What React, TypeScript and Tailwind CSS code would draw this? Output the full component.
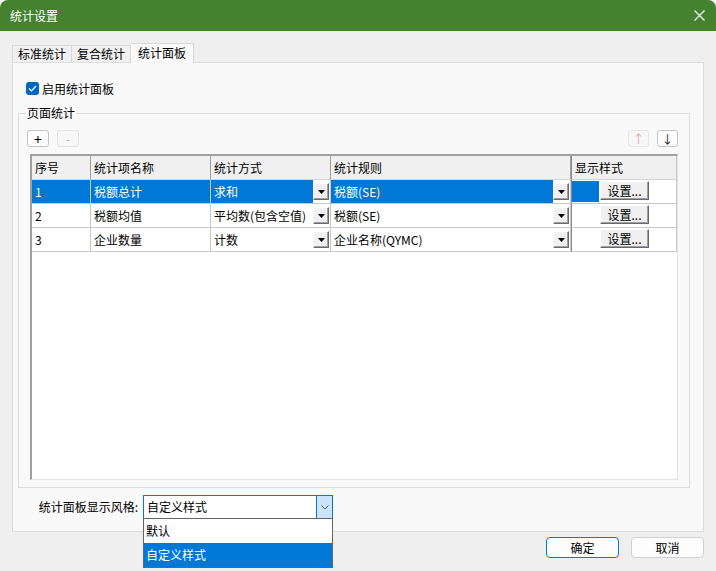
import React from 'react';

const font = '[font-family:"Noto_Sans_CJK_SC","Noto_Sans",sans-serif]';

type Row = {
  no: string;
  name: string;
  method: string;
  rule: string;
  selected?: boolean;
};

const rows: Row[] = [
  { no: '1', name: '税额总计', method: '求和', rule: '税额(SE)', selected: true },
  { no: '2', name: '税额均值', method: '平均数(包含空值)', rule: '税额(SE)' },
  { no: '3', name: '企业数量', method: '计数', rule: '企业名称(QYMC)' },
];

const gridCols = 'grid grid-cols-[59px_120px_120px_240px_1fr]';

function DropBtn(): React.ReactElement {
  return (
    <div className="mt-[3px] w-[16px] h-[17px] shrink-0 bg-[#f0f0f0] border border-t-white border-l-white border-r-[#696969] border-b-[#696969] shadow-[inset_-1px_-1px_0_#a0a0a0] flex items-center justify-center">
      <svg width="7" height="4" viewBox="0 0 7 4">
        <polygon points="0,0 7,0 3.5,4" fill="#000" />
      </svg>
    </div>
  );
}

function ComboCell({ text, selected }: { text: string; selected?: boolean }): React.ReactElement {
  return (
    <div className="flex bg-white border-r border-b border-[#c8c8c8] pr-px">
      <div
        className={[
          'flex-1 pl-[3px] pt-[4px] leading-[16px] whitespace-nowrap',
          selected ? 'bg-[#0078d7] text-white' : '',
        ].join(' ')}
      >
        {text}
      </div>
      <DropBtn />
    </div>
  );
}

function SetBtn(): React.ReactElement {
  return (
    <div className="w-[49px] h-[19px] bg-[#f0f0f0] border border-t-white border-l-white border-r-[#696969] border-b-[#696969] shadow-[inset_-1px_-1px_0_#a0a0a0] flex items-center justify-center leading-none">
      设置...
    </div>
  );
}

export default function App(): React.ReactElement {
  return (
    <div className={`w-[716px] h-[571px] bg-[#efefef] flex flex-col text-[12px] text-black rounded-t-[8px] overflow-hidden ${font}`}>
      {/* Title bar */}
      <div className="h-[31px] shrink-0 bg-[#44822f] flex items-center justify-between pl-[10px] pr-[10px] text-white text-[12px]">
        <span>统计设置</span>
        <svg width="11" height="11" viewBox="0 0 11 11" className="mr-px">
          <path d="M0.5 0.5 L10.5 10.5 M10.5 0.5 L0.5 10.5" stroke="#fff" strokeWidth="1.1" />
        </svg>
      </div>

      <div className="flex flex-col pl-[12px] pt-[12px]">
        {/* Tabs */}
        <div className="flex items-end h-[19px]">
          <div className="w-[60px] h-[17px] border border-b-0 border-[#d9d9d9] bg-[#f0f0f0] flex items-center justify-center leading-none">
            标准统计
          </div>
          <div className="w-[59px] h-[17px] border border-l-0 border-b-0 border-[#d9d9d9] bg-[#f0f0f0] flex items-center justify-center leading-none">
            复合统计
          </div>
          <div className="relative z-10 -mb-px w-[63px] h-[20px] border border-l-0 border-b-0 border-[#d9d9d9] bg-[#f9f9f9] flex items-center justify-center leading-none pb-[2px]">
            统计面板
          </div>
        </div>

        {/* Tab panel */}
        <div className="w-[692px] h-[470px] border border-[#dcdcdc] bg-[#f9f9f9] flex flex-col">
          <div className="flex items-center mt-[19px] ml-[13px] h-[13px]">
            <div className="w-[13px] h-[13px] rounded-[3px] bg-[#0067c0] flex items-center justify-center">
              <svg width="9" height="7" viewBox="0 0 9 7">
                <path d="M1 3.5 L3.5 6 L8 1" stroke="#fff" strokeWidth="1.2" fill="none" />
              </svg>
            </div>
            <span className="ml-[3px] leading-none">启用统计面板</span>
          </div>

          {/* Group box */}
          <div className="relative mt-[18px] ml-[5px] w-[672px] h-[375px] border border-[#dcdcdc] flex flex-col px-[11px] pt-[16px]">
            <span className="absolute -top-[8px] left-[7px] bg-[#f9f9f9] px-px leading-[14px]">页面统计</span>

            <div className="flex items-center justify-between h-[17px]">
              <div className="flex gap-[8px] -ml-[3px]">
                <div className="w-[22px] h-[17px] rounded-[3px] border border-[#c4c4c4] bg-[#fdfdfd] flex items-center justify-center text-[14px] leading-none">
                  +
                </div>
                <div className="w-[22px] h-[17px] rounded-[3px] border border-[#e3e3e3] bg-[#f7f7f7] flex items-center justify-center text-[#b8b8b8] leading-none">
                  -
                </div>
              </div>
              <div className="flex gap-[8px]">
                <div className="w-[21px] h-[17px] rounded-[3px] border border-[#e6e6e6] bg-[#f7f7f7] flex items-center justify-center text-[#e6a5a5] leading-none">
                  ↑
                </div>
                <div className="w-[21px] h-[17px] rounded-[3px] border border-[#c4c4c4] bg-[#fdfdfd] flex items-center justify-center text-[#1a1a1a] leading-none">
                  ↓
                </div>
              </div>
            </div>

            {/* Grid */}
            <div className="mt-[7px] w-[648px] h-[326px] bg-white border-t-2 border-l-2 border-t-[#a0a0a0] border-l-[#a0a0a0] border-r border-b border-r-[#e3e3e3] border-b-[#e3e3e3] flex flex-col">
              <div className={`${gridCols} h-[24px] bg-[#f0f0f0]`}>
                {['序号', '统计项名称', '统计方式', '统计规则'].map((h) => (
                  <div key={h} className="pl-[3px] flex items-center border-r border-b border-r-[#a0a0a0] border-b-[#d4d4d4]">
                    {h}
                  </div>
                ))}
                <div className="pl-[3px] flex items-center border-r border-b border-r-[#c8c8c8] border-b-[#d4d4d4] border-l border-l-[#888]">
                  显示样式
                </div>
              </div>

              {rows.map((r) => (
                <div key={r.no} className={`${gridCols} h-[24px]`}>
                  <div
                    className={[
                      'pl-[3px] flex items-center border-r border-b border-[#c8c8c8]',
                      r.selected ? 'bg-[#0078d7] text-white' : '',
                    ].join(' ')}
                  >
                    {r.no}
                  </div>
                  <div
                    className={[
                      'pl-[3px] flex items-center border-r border-b border-[#c8c8c8]',
                      r.selected ? 'bg-[#0078d7] text-white' : '',
                    ].join(' ')}
                  >
                    {r.name}
                  </div>
                  <ComboCell text={r.method} selected={r.selected} />
                  <ComboCell text={r.rule} selected={r.selected} />
                  <div className="flex items-start border-r border-b border-[#c8c8c8] border-l border-l-[#888]">
                    <div className={['mt-[1px] w-[27px] h-[21px]', r.selected ? 'bg-[#0078d7]' : ''].join(' ')} />
                    <div className="mt-[1px] ml-[1px]">
                      <SetBtn />
                    </div>
                  </div>
                </div>
              ))}
            </div>
          </div>

          {/* Style select */}
          <div className="flex items-center mt-[7px] h-[24px]">
            <span className="w-[130px] text-right pr-[5px] leading-none">统计面板显示风格:</span>
            <div className="relative w-[190px] h-[24px] border border-[#0078d7] bg-white flex">
              <div className="flex-1 pl-[3px] flex items-center">自定义样式</div>
              <div className="w-[16px] bg-[#cce4f7] border-l border-[#0078d7] flex items-center justify-center">
                <svg width="8" height="5" viewBox="0 0 8 5">
                  <path d="M0.5 0.5 L4 4 L7.5 0.5" stroke="#555" strokeWidth="1" fill="none" />
                </svg>
              </div>

              {/* Open list */}
              <div className="absolute z-20 top-full -left-px w-[190px] h-[50px] bg-white border border-[#646464] flex flex-col">
                <div className="h-[24px] pl-[2px] flex items-center">默认</div>
                <div className="h-[24px] pl-[2px] flex items-center bg-[#0078d7] text-white">自定义样式</div>
              </div>
            </div>
          </div>
        </div>
      </div>

      {/* Footer buttons */}
      <div className="flex justify-end gap-[12px] pr-[12px] mt-[5px]">
        <div className="w-[73px] h-[21px] rounded-[4px] border border-[#0078d4] bg-[#fdfdfd] flex items-center justify-center leading-none">
          确定
        </div>
        <div className="w-[73px] h-[21px] rounded-[4px] border border-[#d0d0d0] bg-[#fdfdfd] flex items-center justify-center leading-none">
          取消
        </div>
      </div>
    </div>
  );
}
